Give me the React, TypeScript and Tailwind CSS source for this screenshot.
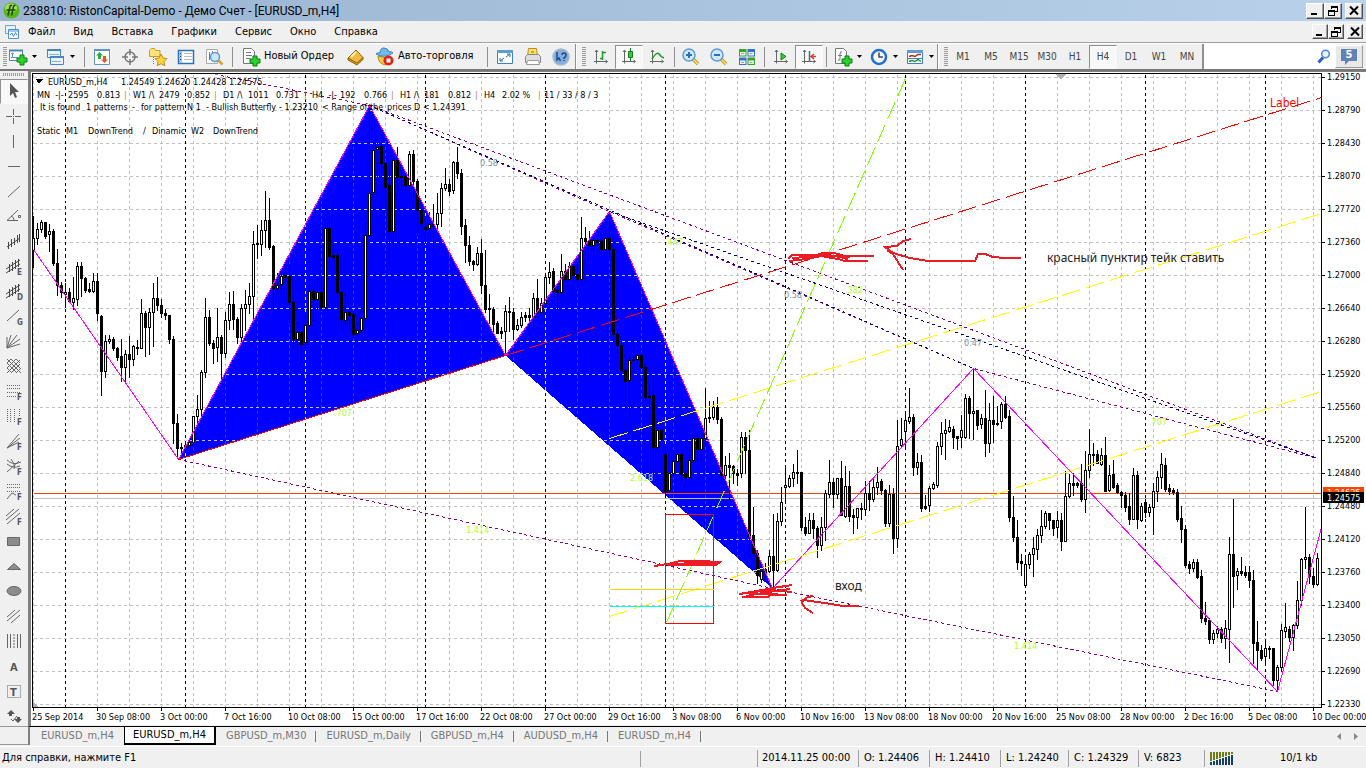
import type { ReactNode } from "react";

// high, open, close, low in chart units (y grows downwards)
const candles = [
  [216, 250, 238, 267], [223, 238, 229, 244], [220, 229, 222, 232], [222, 222, 236, 238], [224, 234, 231, 251],
  [229, 231, 263, 265], [249, 263, 285, 295], [282, 285, 292, 297], [283, 294, 292, 307], [288, 292, 301, 302],
  [277, 302, 298, 309], [262, 299, 266, 305], [262, 266, 278, 296], [277, 278, 290, 292], [283, 289, 291, 292],
  [273, 291, 281, 292], [273, 281, 313, 320], [315, 316, 371, 395], [335, 371, 341, 377], [335, 341, 339, 343],
  [337, 339, 348, 350], [347, 348, 357, 360], [339, 356, 367, 381], [350, 367, 354, 382], [336, 354, 359, 377],
  [345, 359, 346, 365], [340, 347, 348, 354], [299, 348, 313, 348], [311, 313, 327, 356], [308, 327, 312, 354],
  [283, 312, 298, 346], [277, 298, 305, 310], [299, 305, 313, 317], [309, 313, 315, 319], [315, 315, 339, 343],
  [336, 339, 423, 443], [414, 423, 448, 458], [443, 447, 448, 452], [442, 447, 445, 452], [440, 445, 442, 447],
  [416, 442, 416, 446], [395, 416, 409, 423], [370, 409, 372, 422], [298, 372, 317, 377], [310, 317, 343, 345],
  [340, 343, 348, 363], [308, 347, 337, 361], [335, 337, 353, 383], [312, 353, 320, 357], [292, 320, 304, 329],
  [291, 304, 319, 329], [317, 319, 337, 343], [304, 337, 308, 347], [290, 308, 304, 330], [283, 304, 296, 313],
  [231, 296, 244, 320], [225, 243, 244, 258], [220, 244, 230, 255], [191, 230, 220, 247], [198, 220, 247, 249],
  [245, 246, 288, 309], [273, 288, 285, 292], [270, 284, 276, 295], [262, 275, 277, 283], [267, 276, 302, 322],
  [297, 302, 339, 348], [321, 339, 332, 360], [332, 332, 344, 362], [314, 342, 325, 348], [277, 325, 291, 326],
  [288, 291, 299, 320], [279, 299, 292, 310], [276, 292, 307, 310], [219, 307, 228, 308], [213, 228, 256, 262],
  [245, 255, 257, 260], [250, 255, 292, 296], [291, 292, 319, 330], [294, 320, 312, 327], [307, 312, 315, 330],
  [311, 314, 334, 337], [323, 333, 330, 346], [304, 330, 318, 333], [223, 318, 235, 333], [105, 235, 193, 235],
  [143, 192, 150, 210], [143, 149, 147, 177], [143, 146, 163, 173], [162, 163, 187, 208], [168, 185, 231, 270],
  [157, 231, 160, 247], [147, 160, 177, 195], [170, 176, 177, 190], [172, 176, 185, 190], [151, 185, 154, 201],
  [150, 154, 181, 197], [179, 181, 210, 235], [201, 210, 223, 225], [217, 227, 229, 243], [212, 228, 224, 230],
  [204, 224, 225, 247], [193, 224, 213, 228], [183, 213, 188, 226], [168, 188, 184, 190], [179, 184, 191, 195],
  [161, 190, 162, 193], [147, 162, 173, 178], [169, 173, 226, 234], [219, 225, 245, 262], [236, 245, 261, 265],
  [260, 261, 264, 270], [247, 264, 253, 265], [239, 253, 285, 293], [250, 285, 309, 312], [294, 308, 309, 323],
  [307, 309, 324, 334], [321, 323, 333, 333], [327, 331, 333, 338], [305, 331, 311, 355], [297, 311, 312, 331],
  [308, 312, 329, 339], [319, 329, 325, 330], [312, 325, 317, 327], [312, 315, 317, 321], [308, 315, 317, 336],
  [293, 317, 298, 330], [279, 298, 312, 313], [298, 312, 303, 313], [276, 303, 277, 305], [262, 277, 272, 283],
  [268, 271, 291, 291], [283, 290, 292, 308], [254, 292, 271, 293], [264, 271, 279, 280], [262, 279, 266, 279],
  [265, 266, 275, 279], [262, 274, 279, 290], [217, 279, 238, 286], [227, 238, 241, 263], [231, 240, 245, 246],
  [238, 245, 240, 249], [238, 240, 242, 245], [232, 241, 249, 254], [233, 249, 238, 249], [211, 238, 249, 257],
  [244, 249, 334, 339], [331, 334, 345, 352], [341, 345, 370, 374], [363, 370, 381, 409], [354, 380, 360, 415],
  [338, 359, 360, 361], [351, 359, 355, 363], [353, 355, 367, 368], [364, 367, 397, 399], [384, 396, 397, 423],
  [375, 395, 447, 474], [418, 447, 430, 451], [424, 430, 439, 441], [447, 454, 491, 495], [472, 490, 473, 492],
  [450, 473, 461, 474], [450, 461, 454, 463], [453, 454, 474, 482], [463, 473, 477, 487], [455, 477, 460, 478],
  [432, 460, 438, 461], [434, 438, 449, 460], [432, 449, 438, 459], [388, 438, 418, 445], [401, 417, 418, 422],
  [401, 417, 407, 419], [397, 407, 419, 423], [417, 419, 475, 477], [456, 475, 465, 478], [453, 465, 467, 498],
  [465, 466, 473, 483], [469, 473, 475, 485], [432, 473, 437, 477], [432, 437, 450, 473], [430, 450, 536, 557],
  [507, 535, 553, 558], [550, 553, 575, 583], [570, 579, 571, 582], [563, 569, 572, 577], [550, 571, 556, 572],
  [514, 556, 570, 587], [513, 570, 521, 571], [487, 521, 502, 525], [466, 487, 485, 502], [475, 486, 478, 487],
  [464, 478, 472, 486], [450, 472, 473, 483], [472, 472, 527, 530], [517, 527, 533, 535], [513, 533, 520, 533],
  [513, 520, 528, 538], [526, 528, 545, 557], [517, 545, 527, 550], [490, 527, 493, 540], [460, 494, 482, 497],
  [478, 482, 494, 507], [478, 494, 478, 498], [461, 478, 515, 515], [466, 516, 486, 517], [471, 486, 516, 521],
  [509, 515, 517, 533], [508, 517, 508, 528], [503, 508, 509, 519], [481, 509, 493, 515], [481, 493, 499, 510],
  [478, 499, 487, 501], [467, 487, 482, 494], [479, 481, 490, 494], [489, 490, 523, 526], [485, 523, 494, 528],
  [488, 494, 538, 553], [420, 538, 446, 547], [418, 445, 439, 446], [413, 431, 420, 448], [388, 421, 417, 423],
  [414, 417, 467, 475], [453, 467, 462, 474], [455, 462, 508, 511], [495, 506, 508, 509], [486, 505, 488, 511],
  [482, 488, 484, 489], [442, 485, 446, 487], [422, 446, 433, 454], [419, 433, 430, 459], [420, 431, 427, 432],
  [426, 429, 437, 448], [436, 436, 438, 449], [415, 437, 430, 447], [394, 437, 398, 438], [396, 398, 413, 438],
  [368, 413, 411, 439], [410, 410, 425, 429], [414, 424, 418, 428], [390, 418, 443, 456], [403, 443, 420, 452],
  [396, 420, 424, 442], [406, 423, 424, 425], [402, 421, 404, 428], [396, 404, 417, 418], [410, 416, 517, 521],
  [496, 517, 537, 541], [520, 537, 562, 569], [554, 561, 563, 575], [558, 585, 564, 585], [552, 564, 554, 568],
  [537, 554, 548, 576], [529, 549, 535, 559], [510, 535, 526, 542], [511, 526, 513, 528], [513, 513, 520, 529],
  [520, 520, 528, 535], [511, 527, 520, 537], [513, 520, 541, 550], [471, 541, 496, 541], [474, 496, 483, 497],
  [473, 483, 485, 495], [482, 483, 485, 487], [464, 483, 499, 501], [451, 499, 470, 512], [429, 470, 454, 477],
  [443, 454, 455, 465], [450, 454, 463, 463], [448, 464, 455, 465], [437, 455, 491, 491], [465, 490, 475, 491],
  [460, 474, 487, 488], [483, 485, 492, 493], [491, 492, 495, 507], [492, 495, 507, 511], [493, 506, 519, 524],
  [468, 519, 475, 519], [471, 475, 519, 528], [503, 520, 506, 521], [499, 502, 512, 517], [504, 512, 507, 516],
  [483, 507, 491, 534], [471, 491, 477, 501], [453, 477, 464, 488], [458, 465, 489, 491], [484, 488, 491, 494],
  [488, 490, 492, 494], [489, 492, 519, 521], [506, 518, 529, 542], [525, 529, 565, 567], [561, 564, 568, 573],
  [559, 568, 562, 571], [559, 562, 577, 578], [570, 576, 618, 622], [602, 618, 621, 624], [618, 620, 639, 643],
  [630, 639, 633, 643], [626, 633, 629, 637], [627, 629, 638, 642], [620, 638, 628, 648], [537, 629, 554, 662],
  [499, 554, 576, 607], [568, 575, 571, 589], [557, 571, 573, 575], [566, 572, 575, 577], [566, 572, 580, 587],
  [570, 580, 643, 663], [621, 642, 650, 670], [645, 650, 658, 660], [639, 656, 648, 662], [646, 648, 649, 658],
  [648, 648, 680, 685], [665, 680, 667, 691], [624, 667, 630, 671], [603, 631, 627, 637], [626, 629, 637, 641],
  [624, 637, 625, 650], [581, 625, 600, 628], [558, 600, 559, 605], [507, 559, 557, 568], [554, 557, 576, 583],
  [568, 576, 584, 587], [553, 584, 558, 585],
];

const prices = [
  "1.29150", "1.28790", "1.28430", "1.28070", "1.27720", "1.27360", "1.27000", "1.26640", "1.26280", "1.25920",
  "1.25560", "1.25200", "1.24840", "1.24480", "1.24120", "1.23760", "1.23400", "1.23050", "1.22690", "1.22330",
];

const dates = [
  "25 Sep 2014", "30 Sep 08:00", "3 Oct 00:00", "7 Oct 16:00", "10 Oct 08:00", "15 Oct 00:00", "17 Oct 16:00",
  "22 Oct 08:00", "27 Oct 00:00", "29 Oct 16:00", "3 Nov 08:00", "6 Nov 00:00", "10 Nov 16:00", "13 Nov 08:00",
  "18 Nov 00:00", "20 Nov 16:00", "25 Nov 08:00", "28 Nov 00:00", "2 Dec 16:00", "5 Dec 08:00", "10 Dec 00:00",
];

const quote: [number, string][] = [
  [48, "EURUSD_m,H4"], [121, "1.24549"], [157, "1.24620"], [193, "1.24428"], [229, "1.24575"],
];

const summary: [number, string][] = [
  [37, "MN  -|-"], [68, "2595"], [97, "0.813"], [124, "|"], [133, "W1 /\\"], [159, "2479"], [187, "0.852"],
  [214, "|"], [223, "D1 /\\"], [248, "1011"], [276, "0.731"], [304, "|"], [312, "H4  -|-"], [340, "192"],
  [364, "0.766"], [391, "|"], [400, "H1 /\\"], [424, "181"], [448, "0.812"], [475, "|"], [484, "H4"],
  [502, "2.02 %"], [538, "|"], [544, "11 / 33 / 8 / 3"],
];

const pattern: [number, string][] = [
  [40, "It is found"], [86, "1 patterns"], [132, "-"], [141, "for pattern N 1"], [206, "- Bullish Butterfly"],
  [279, "- 1.23210"], [322, "< Range of the"], [387, "prices D"], [423, "< 1.24391"],
];

const trend: [number, string][] = [
  [37, "Static"], [66, "M1"], [88, "DownTrend"], [143, "/"], [152, "Dinamic"], [191, "W2"], [213, "DownTrend"],
];

const ratios: [number, number, string, string][] = [
  [480, 166, "0.58", "#8090a0"], [784, 298, "0.58", "#8090a0"], [964, 346, "0.47", "#8090a0"],
  [665, 245, ".447", "#adff2f"], [845, 293, ".382", "#adff2f"], [334, 416, ".707", "#adff2f"],
  [630, 481, "2.618", "#adff2f"], [466, 533, "1.414", "#adff2f"], [1014, 649, "1.414", "#adff2f"],
  [1149, 425, ".707", "#adff2f"],
];

const dotted: [string, string][] = [
  ["M215 74L369 105L1317 458", "#800080"],
  ["M369 105L609 211L973 368L1317 458", "#800080"],
  ["M369 105L973 368", "#000080"],
  ["M609 211L1317 458", "#000080"],
  ["M178 459L772 588L1277 691", "#800080"],
];

const rows = prices.map((_, i) => 77 + i * 33);
const columns = Array.from({ length: 41 }, (_, i) => 33 + i * 32);
const weeks = Array.from({ length: 11 }, (_, i) => 65 + i * 120);

const Words = ({ y, words }: { y: number; words: [number, string][] }) =>
  words.map(([x, word]) => (
    <text key={x} x={x} y={y} fill={word === "|" ? "#c08040" : "#000"}>{word}</text>
  ));

const Chart = () => (
  <svg
    viewBox="31 72 1335 653"
    className="block h-auto w-full bg-white font-['DejaVu_Sans_Condensed','Noto_Sans',sans-serif] text-[9px] [&_text]:whitespace-pre"
    role="img"
    aria-label="EURUSD_m,H4"
  >
    <defs>
      <clipPath id="plot"><rect x="33" y="74" width="1288" height="633" /></clipPath>
      <clipPath id="wings"><path d="M178 459L369 105L505 355ZM505 355L609 211L772 588Z" /></clipPath>
    </defs>

    <g shapeRendering="crispEdges" transform="translate(.5 .5)" fill="none">
      <g strokeDasharray="3 3" stroke="#c0c0c0">
        {columns.map((x) => <path key={x} d={`M${x} 74V707`} />)}
        {rows.map((y) => <path key={y} d={`M33 ${y}H1321`} />)}
        {weeks.map((x) => <path key={x} d={`M${x} 74V707`} stroke="#fff" strokeDasharray="none" />)}
        {weeks.map((x) => <path key={x} d={`M${x} 74V707`} stroke="#000" />)}
      </g>
      <path d="M178 459L369 105L505 355ZM505 355L609 211L772 588Z" fill="#00f" />
      <g strokeDasharray="3 3" clipPath="url(#wings)">
        {columns.map((x) => <path key={x} d={`M${x} 74V707`} stroke="#3f3fc8" />)}
        {rows.map((y) => <path key={y} d={`M33 ${y}H1321`} stroke="#c0c0ff" />)}
        {weeks.map((x) => <path key={x} d={`M${x} 74V707`} stroke="#ffff50" />)}
      </g>
      <path d="M33 493H1321" stroke="#ff4500" />
      <path d="M33 498H1321" stroke="#c0c0c0" />
    </g>

    <g clipPath="url(#plot)" shapeRendering="crispEdges">
      {candles.map(([high, open, close, low], i) => {
        const x = 33 + i * 4;
        const top = Math.min(open, close);
        const height = Math.abs(open - close) + 1;
        return (
          <g key={x}>
            <rect x={x} y={high} width="1" height={low - high + 1} />
            <rect x={x - 1} y={top} width="3" height={height} />
            {close < open && height > 2 && <rect x={x} y={top + 1} width="1" height={height - 2} fill="#fff" />}
          </g>
        );
      })}
    </g>

    <g shapeRendering="crispEdges" transform="translate(.5 .5)" fill="none" clipPath="url(#plot)">
      <path d="M33 249L178 459L369 105L505 355L609 211L772 588L973 368L1277 691L1321 527" stroke="#f0f" />
      {dotted.map(([d, color]) => <path key={d} d={d} stroke={color} strokeDasharray="3 3" />)}
      <path d="M178 459L505 355" stroke="#f00" />
      <path d="M505 355L1321 97" stroke="#f00" strokeDasharray="19 6" />
      <path d="M609 438L1321 213M609 616L1321 391" stroke="#ff0" strokeDasharray="19 6" />
      <path d="M666 622L905 78" stroke="#7fff00" strokeDasharray="19 6" />
      <path d="M665 514H713V623H665Z" stroke="#f00" />
      <path d="M609 589H713" stroke="#ffd700" />
      <path d="M609 606H713" stroke="#0ff" />
    </g>

    <g stroke="#ed1c24" strokeWidth="2" fill="none" shapeRendering="crispEdges">
      <path d="M788 259L792 255H820L822 253H834L845 256H874M789 261L806 259L821 256L838 259L845 261H868M792 258L806 257L820 254L834 256L845 258L852 256M820 256H842L848 260" />
      <path d="M1021 258H1005L993 257L985 254H978L975 261H928L910 258L893 253L885 247L897 246L903 241L911 239M887 250L893 254L903 270" />
      <path d="M654 566L668 564L680 561H700L720 562L716 565H668L690 563H718" />
      <path d="M739 594L757 591L773 588L792 585M739 594L770 590L792 592M742 597H768L770 595H787M746 596L768 592L790 589M750 594H778" />
      <path d="M859 606H843L825 603L803 600L808 597L813 596M803 600L802 603L805 608L813 613" />
    </g>

    <g shapeRendering="crispEdges">
      <path d="M32 73H1322V708H32ZM33 74V707H1321V74Z" fillRule="evenodd" />
      {rows.map((y) => <rect key={y} x="1322" y={y} width="3" height="1" />)}
      {dates.map((date, i) => <rect key={date} x={33 + i * 64} y="708" width="1" height="3" />)}
      <path d="M33 702L38 707H33ZM1056 74H1066L1061 80Z" fill="#b0b0b0" />
      <path d="M36 79H43L39 84Z" />
    </g>

    {prices.map((price, i) => <text key={price} x="1327" y={80 + i * 33}>{price}</text>)}
    {dates.map((date, i) => <text key={date} x={32 + i * 64} y="720">{date}</text>)}
    <rect x="1323" y="487" width="41" height="11" fill="#ff4500" />
    <text x="1327" y="496" fill="#fff">1.24625</text>
    <rect x="1323" y="492" width="41" height="11" />
    <text x="1327" y="501" fill="#fff">1.24575</text>

    <Words y={85} words={quote} />
    <Words y={98} words={summary} />
    <Words y={110} words={pattern} />
    <Words y={134} words={trend} />
    {ratios.map(([x, y, label, color]) => <text key={`${x}-${y}`} x={x} y={y} fill={color}>{label}</text>)}
    <text x="1270" y="107" fill="#f00" className="text-[12px]">Label</text>
    <g fill="#222" className="font-['Noto_Sans',sans-serif] text-[12px]">
      <text x="1047" y="262">красный пунктир тейк ставить</text>
      <text x="835" y="590">вход</text>
    </g>
  </svg>
);

const Icon = ({ size = 20, children }: { size?: number; children: ReactNode }) => (
  <svg width={size} height={size} viewBox={`0 0 ${size} ${size}`} fill="none" className="shrink-0">{children}</svg>
);

const Caret = () => (
  <svg width="5" height="3" viewBox="0 0 5 3" className="shrink-0"><path d="M0 0H5L2.500 3Z" /></svg>
);

const Plus = () => <path d="M12 9h4v3h3v4h-3v3h-4v-3H9v-4h3z" fill="#2bd32b" stroke="#087a12" />;

const Divider = ({ tight }: { tight?: boolean }) => (
  <div className={`flex shrink-0 justify-center ${tight ? "w-1.5" : "w-2"}`}>
    <div className="h-5 w-px bg-[#8f8f8f]" />
  </div>
);

const GroupEdge = () => <div className="mr-[5px] box-content h-full w-px shrink-0 border-r border-white bg-[#909090]" />;

const Grip = () => (
  <div className="mr-px h-5 w-1 shrink-0 bg-[repeating-linear-gradient(#9a9a9a_0_1px,#f0f0f0_1px_2px)]" />
);

const Tool = ({ label, pressed, children }: { label: string; pressed?: boolean; children: ReactNode }) => (
  <button
    type="button"
    aria-label={label}
    aria-pressed={pressed}
    className="flex h-6 w-7 shrink-0 items-center justify-center border border-transparent aria-pressed:border-t-[#909090] aria-pressed:border-l-[#909090] aria-pressed:bg-[#f8f8f8]"
  >
    {children}
  </button>
);

const Axes = ({ children }: { children: ReactNode }) => (
  <Icon>
    <path d="M5.500 3v13.500M3 14.500h13.500M4 5l1.500-2L7 5M14.500 13l2 1.500-2 1.500" stroke="#666" />
    {children}
  </Icon>
);

const Magnifier = ({ plus }: { plus?: boolean }) => (
  <Icon>
    <path d="M12 12l5 5" stroke="#c79a22" strokeWidth="3.500" />
    <path d="M12 12l5 5" stroke="#ffe36b" strokeWidth="1.500" />
    <circle cx="8" cy="8" r="6" fill="#cfe9fb" stroke="#5b9bd8" strokeWidth="1.500" />
    <path d={plus ? "M5 8h6M8 5v6" : "M5 8h6"} stroke="#2a6fbb" strokeWidth="2" />
  </Icon>
);

const WindowButtons = ({ compact }: { compact?: boolean }) => {
  const face = `flex shrink-0 items-center justify-center border border-t-white border-l-white border-r-[#505050] border-b-[#505050] bg-[#f0f0f0] shadow-[inset_-1px_-1px_#a0a0a0] ${
    compact ? "h-[15px] w-4" : "h-4 w-[18px]"
  }`;
  return (
    <div className="flex pr-[3px]">
      <button type="button" aria-label="Свернуть" className={face}>
        <svg width="12" height="11" viewBox="0 0 12 11"><path d="M2 8h6v2H2z" /></svg>
      </button>
      <button type="button" aria-label="Восстановить" className={face}>
        <svg width="12" height="11" viewBox="0 0 12 11" fill="none" stroke="#000" shapeRendering="crispEdges">
          <path d="M4.500 4V1.500h6v5H8M4 2h7M1.500 5.500h6v5h-6zM1 6h7" />
        </svg>
      </button>
      <button type="button" aria-label="Закрыть" className={`${face} ml-[3px]`}>
        <svg width="12" height="11" viewBox="0 0 12 11"><path d="M2 1.500l8 8M10 1.500l-8 8" stroke="#000" strokeWidth="2" /></svg>
      </button>
    </div>
  );
};

const TitleBar = () => (
  <header className="flex h-[21px] items-center bg-linear-to-r from-[#99b4d1] to-[#b9d1ea] pl-[3px]">
    <svg width="17" height="17" viewBox="0 0 17 17" className="mr-[3px]">
      <circle cx="8.500" cy="8.500" r="8" fill="#58b813" />
      <ellipse cx="8" cy="6" rx="6" ry="4.500" fill="#a4dc5c" />
      <path d="M5 13.500l2-9q.4-1.500 2-1M3.500 8h9M8.500 13.500l2-9q.4-1.500 2-1" stroke="#194a08" strokeWidth="1.500" fill="none" />
    </svg>
    <h1 className="flex-1 truncate font-['Roboto','Noto_Sans',sans-serif] text-[12px]">
      238810: RistonCapital-Demo - Демо Счет - [EURUSD_m,H4]
    </h1>
    <WindowButtons />
  </header>
);

const menu = ["Файл", "Вид", "Вставка", "Графики", "Сервис", "Окно", "Справка"];

const MenuBar = () => (
  <nav className="flex h-[21px] items-center pl-1">
    <Icon size={16}>
      <path d="M1.500 1.500h10v8h-10z" fill="#e8f3fd" stroke="#6aa5dc" />
      <path d="M4.500 5.500h10v9h-10z" fill="#fff" stroke="#4c8ed0" />
      <path d="M4 7h11M6 11l2-2 1.500 3.500 2-4 1.500 3" stroke="#4c8ed0" />
    </Icon>
    <div className="flex flex-1 gap-[18px] pt-[2px] pl-2 text-[11px]">
      {menu.map((item) => <a key={item} href="#">{item}</a>)}
    </div>
    <WindowButtons compact />
  </nav>
);

const frames = ["M1", "M5", "M15", "M30", "H1", "H4", "D1", "W1", "MN"];

const Toolbar = () => (
  <div className="flex h-[29px] items-center border-t border-b-2 border-t-[#a0a0a0] border-b-[#777] pt-px pl-[3px] shadow-[inset_0_1px_#fff]">
    <Grip />
    <button type="button" aria-label="Новый график" className="flex w-[38px] shrink-0 items-center gap-1">
      <Icon>
        <path d="M1.500 3.500h13v10h-13z" fill="#fff" stroke="#4d84b8" />
        <path d="M1 3.500h14" stroke="#4d84b8" strokeWidth="2" />
        <path d="M4.500 6v5M3 7l1.500-1L6 7M3 10.500h7" stroke="#5795c8" />
        <g transform="translate(0 -1)"><Plus /></g>
      </Icon>
      <Caret />
    </button>
    <button type="button" aria-label="Профили" className="flex w-[34px] shrink-0 items-center gap-1">
      <Icon>
        <path d="M1.500 2.500h13v8h-13zM4.500 9.500h13v8h-13z" fill="#eaf4fd" stroke="#4d84b8" />
        <path d="M1 3h14M4 10h14" stroke="#4d84b8" strokeWidth="2" />
        <path d="M3 7.500h10M6 14.500h9" stroke="#88b4dc" />
      </Icon>
      <Caret />
    </button>
    <Divider />
    <Tool label="Обзор рынка">
      <Icon>
        <path d="M2.500 2.500h15v15h-15z" fill="#fff" stroke="#5c94c8" />
        <path d="M2 3h16" stroke="#5c94c8" strokeWidth="2" />
        <path d="M7.500 5l3.500 3.500H9V12H6V8.500H4z" fill="#2fae35" />
        <path d="M12.500 16L9 12.500h2V9h3v3.500h2z" fill="#e4552a" />
      </Icon>
    </Tool>
    <Tool label="Перекрестие">
      <Icon>
        <circle cx="10" cy="10" r="5" stroke="#777" strokeWidth="1.500" />
        <path d="M10 2v6M10 12v6M2 10h6M12 10h6" stroke="#777" strokeWidth="1.500" />
      </Icon>
    </Tool>
    <Tool label="Навигатор">
      <Icon>
        <path d="M1.500 3.500l2-2h3l1.500 2h4v6h-10.500z" fill="#ffe17a" stroke="#c89e28" />
        <path d="M5.500 10v8" stroke="#777" strokeDasharray="1 1" />
        <path d="M13 7l2 4 4 .5-3 3 .8 4.200L13 16.700 9.200 18.700 10 14.500l-3-3 4-.5z" fill="#ffd43c" stroke="#bd8c16" />
      </Icon>
    </Tool>
    <Tool label="Терминал">
      <Icon>
        <path d="M2.500 3.500h15v13h-15z" fill="#fff" stroke="#2f6fb3" strokeWidth="1.500" />
        <path d="M3 4h3v12H3z" fill="#9cc4ea" />
        <path d="M8 6.500h8M8 9.500h8M8 12.500h8" stroke="#bbb" />
        <path d="M4.500 6v8" stroke="#234e91" strokeDasharray="1 2" />
      </Icon>
    </Tool>
    <Tool label="Тестер">
      <Icon>
        <path d="M2.500 2.500h11v14h-11z" fill="#fff" stroke="#aaa" />
        <path d="M5.500 5v8M8.500 4v5" stroke="#777" />
        <circle cx="11" cy="10" r="4.500" fill="#cbe8fb" stroke="#5a9bd0" strokeWidth="1.500" />
        <path d="M14.500 13.500l4 4" stroke="#d3a132" strokeWidth="2.500" />
      </Icon>
    </Tool>
    <Divider />
    <button type="button" className="flex w-[106px] shrink-0 items-center gap-[3px] pl-[5px] text-[11px] whitespace-nowrap">
      <Icon>
        <path d="M2.500 1.500h8l3 3v12h-11z" fill="#fff" stroke="#777" />
        <path d="M5 5.500h5M5 8.500h6M5 11.500h4" stroke="#777" />
        <Plus />
      </Icon>
      Новый Ордер
    </button>
    <Tool label="Редактор">
      <Icon>
        <path d="M2 11l8-8 7 7.500-6 6.500z" fill="#f0bb43" stroke="#94640a" />
        <path d="M2 11v2l9 5 6-5.500v-2L11 16z" fill="#d99a24" stroke="#94640a" />
        <path d="M5 10l5-5" stroke="#fff0b0" strokeWidth="2" />
      </Icon>
    </Tool>
    <button type="button" className="flex w-[113px] shrink-0 items-center gap-[3px] pl-[5px] text-[11px] whitespace-nowrap">
      <Icon>
        <path d="M3 9q0 8 8 9l5-6z" fill="#f4c944" stroke="#b5881d" />
        <path d="M1 7q8 5 17-1-1-2-4-1-1-4-5-4T5 6Q2 5 1 7z" fill="#71b9e8" stroke="#3f83ba" />
        <circle cx="13.500" cy="13.500" r="5" fill="#dc2414" />
        <path d="M11.500 11.500h4v4h-4z" fill="#fff" />
      </Icon>
      Авто-торговля
    </button>
    <Divider />
    <Tool label="Полный экран">
      <Icon>
        <path d="M2.500 3.500h15v13h-15z" fill="#fff" stroke="#3f7fbc" />
        <path d="M2 4.500h16" stroke="#5b9bd8" strokeWidth="3" />
        <path d="M11 10l4-3M12 7h3v3M9 11l-4 3M5 11v3h3" stroke="#2a6fa8" />
      </Icon>
    </Tool>
    <Tool label="Печать">
      <Icon>
        <path d="M5.500 1.500h8l1 8h-10z" fill="#ffe06b" stroke="#b98e1d" />
        <path d="M2.500 9.500l2-2h11l2 2v6h-15z" fill="#ddd" stroke="#888" />
        <path d="M4.500 13.500h11l1 4h-13z" fill="#fff" stroke="#999" />
        <path d="M8 5h3" stroke="#8a6b12" />
      </Icon>
    </Tool>
    <Tool label="Помощь">
      <Icon>
        <circle cx="10" cy="10" r="8" fill="#82aee0" stroke="#a8b8cc" strokeWidth="1.500" />
        <path d="M6 5v8l2-2 1.500 3M11 8q0-2 2-2t2 2-2 3v1M13 13v1" stroke="#1c4a86" strokeWidth="1.500" />
      </Icon>
    </Tool>
    <GroupEdge />
    <Grip />
    <Tool label="Бары"><Axes><path d="M11.500 4v9M9 11.500h3M12 5.500h3" stroke="#1f9a2a" strokeWidth="1.500" /></Axes></Tool>
    <Tool label="Свечи" pressed>
      <Axes><path d="M11.500 1v13" stroke="#167a1c" /><path d="M9.500 4.500h4v6h-4z" fill="#35cc3d" stroke="#167a1c" /></Axes>
    </Tool>
    <Tool label="Линия"><Axes><path d="M5 12q5-8 7-5 2 3 5 4" stroke="#1f9a2a" strokeWidth="1.500" /></Axes></Tool>
    <Divider tight />
    <Tool label="Увеличить"><Magnifier plus /></Tool>
    <Tool label="Уменьшить"><Magnifier /></Tool>
    <Tool label="Упорядочить окна">
      <Icon>
        <path d="M2 2h7.500v7.500H2zM10.500 10.500H18V18h-7.500z" fill="#3aa12f" />
        <path d="M10.500 2H18v7.500h-7.500zM2 10.500h7.500V18H2z" fill="#3a6fd0" />
        <path d="M3 5h5.500v3.500H3zM11.500 5H17v3.500h-5.500zM3 13.500h5.500V17H3zM11.500 13.500H17V17h-5.500z" fill="#e9f5e4" />
        <path d="M4 6.500h3M12.500 6.500h3M4 15.500h3M12.500 15.500h3" stroke="#8ab08a" />
      </Icon>
    </Tool>
    <Divider tight />
    <Tool label="Автопрокрутка"><Axes><path d="M10 6l5 3.500-5 3.500z" fill="#35cc3d" stroke="#167a1c" /></Axes></Tool>
    <Tool label="Сдвиг графика" pressed>
      <Axes><path d="M10.500 4v10" stroke="#3469b5" strokeWidth="1.500" /><path d="M17 9.500h-4M15 7l-3 2.500 3 2.500" stroke="#d2401c" strokeWidth="1.500" /></Axes>
    </Tool>
    <Divider tight />
    <button type="button" aria-label="Индикаторы" className="flex w-9 shrink-0 items-center gap-1 pl-1">
      <Icon>
        <path d="M2.500 1.500h8l3 3v12h-11z" fill="#fff" stroke="#777" />
        <path d="M9 5q-2-1-2 2v5q0 2-2 1M5 8.500h4" stroke="#777" />
        <Plus />
      </Icon>
      <Caret />
    </button>
    <button type="button" aria-label="Периоды" className="flex w-9 shrink-0 items-center gap-1 pl-1">
      <Icon>
        <circle cx="10" cy="10" r="7" fill="#f6fafd" stroke="#1f6fd0" strokeWidth="2.500" />
        <path d="M10 5.500V10h4" stroke="#444" strokeWidth="1.500" />
      </Icon>
      <Caret />
    </button>
    <button type="button" aria-label="Шаблоны" className="flex w-9 shrink-0 items-center gap-1 pl-1">
      <Icon>
        <path d="M2.500 3.500h15v13h-15z" fill="#fff" stroke="#3f7fbc" />
        <path d="M2 4.500h16" stroke="#5b9bd8" strokeWidth="3" />
        <path d="M3 11.500h14" stroke="#3f7fbc" />
        <path d="M4 9.500l3-1 3 1 3-2h3" stroke="#a32a1c" strokeWidth="1.500" />
        <path d="M4 14.500l3-1 3 1 3-2 3 2" stroke="#2c8f35" strokeWidth="1.500" />
      </Icon>
      <Caret />
    </button>
    <GroupEdge />
    <Grip />
    <div className="flex text-[10px] text-[#444]">
      {frames.map((frame) => <Tool key={frame} label={frame} pressed={frame === "H4" || undefined}>{frame}</Tool>)}
    </div>
    <div className="ml-px flex h-full min-w-0 flex-1 items-center border-l-2 border-[#909090] bg-white">
      <input type="search" aria-label="Поиск" className="h-full min-w-0 flex-1 px-1 text-[11px] outline-none" />
      <svg width="14" height="15" viewBox="0 0 14 15" fill="none" className="mr-1 shrink-0">
        <path d="M6 8.500L1.500 13.500" stroke="#2f5fc0" strokeWidth="3" />
        <circle cx="8.500" cy="5" r="3.800" fill="#e6f1ff" stroke="#4f86e0" strokeWidth="1.500" />
      </svg>
    </div>
    <button type="button" aria-label="Сообщения" className="mr-[3px] flex h-[23px] w-7 shrink-0 items-center justify-center border border-l-white border-r-[#999] border-b-[#999] border-t-white bg-[#e8e8e8]">
      <span className="relative mb-1 flex h-3 w-4 items-center justify-center bg-[#6281b5] text-[11px] leading-none font-bold text-white">
        5
        <span className="absolute top-3 left-1 border-t-4 border-r-4 border-t-[#6281b5] border-r-transparent" />
      </span>
    </button>
  </div>
);

const Mark = ({ children }: { children: string }) => (
  <text x="15" y="20" fill="#555" stroke="none" className="text-[8px] font-bold">{children}</text>
);

const drawing: [string, ReactNode][] = [
  ["Курсор", <path d="M8 3v13l3-3 2 5 2-1-2-5h4z" fill="#555" stroke="none" />],
  ["Перекрестие", <path d="M11.500 4v6M11.500 13v6M4 11.500h6M13 11.500h6M11 11.500h1" />],
  ["Вертикальная линия", <path d="M11.500 5v13" />],
  ["Горизонтальная линия", <path d="M6 11.500h12" />],
  ["Трендовая линия", <path d="M6 17L18 6" />],
  ["Трендовая линия по углу", <path d="M16 5L5 15.500h11M9 11q3 1 3 4M16.500 10.500h2v2h-2z" />],
  ["Волны", <path d="M5 17l13-9M6.500 12v7M9.500 9v8M12.500 8v7M15.500 5v8M17.500 4v8" stroke="#444" />],
  ["Равноудаленный канал", <><path d="M4 14L18 5M4 18L18 9M7.500 9v8M10.500 7v9M13.500 5v9M16.500 4v8" stroke="#444" /><Mark>E</Mark></>],
  ["Канал отклонений", <><path d="M4 14L18 5M4 18L18 9M7.500 9v8M10.500 7v9M13.500 5v9M16.500 4v8" stroke="#444" /><Mark>D</Mark></>],
  ["Линия Ганна", <><path d="M5 16L17 5" /><Mark>G</Mark></>],
  ["Веер Ганна", <path d="M5 18V7M5 18L9 5M5 18L15 5M5 18L18 9M5 18L18 14" />],
  ["Сетка Ганна", <path d="M5 8l4-4 10 10M5 13l9-9M5 18L18 5M9 18l9-9M5 4l14 14M5 8l10 10M5 13l5 5M14 18l4-4M14 4l4 4" />],
  ["Линии Фибоначчи", <><path d="M5 5.500h14M5 8.500h14M5 12.500h14M5 16.500h9" strokeDasharray="1 1" /><Mark>F</Mark></>],
  ["Временные зоны", <><path d="M5.500 4v14M8.500 4v14M12.500 4v14M17.500 4v8" strokeDasharray="1 1" /><Mark>F</Mark></>],
  ["Веер Фибоначчи", <><path d="M5 18L17 4M5 18L18 8M5 18L17 12" /><Mark>F</Mark></>],
  ["Дуги Фибоначчи", <><path d="M5 5q6 6 14 2M5 9q6 5 13 2M5 17L17 6M9 4q5 7 3 10" /><Mark>F</Mark></>],
  ["Расширение Фибоначчи", <><path d="M5 4.500h14M5 7.500h14M5 11.500h14" strokeDasharray="1 1" /><path d="M5 19l5-6 4 2" /><Mark>F</Mark></>],
  ["Канал Фибоначчи", <><path d="M4 11L12 4M4 15L17 4M5 19L18 8" /><Mark>F</Mark></>],
  ["Прямоугольник", <path d="M5.500 7.500h12v8h-12z" fill="#8c8c8c" />],
  ["Треугольник", <path d="M5.500 14.500h13l-6.500-6z" fill="#8c8c8c" />],
  ["Эллипс", <ellipse cx="12" cy="11" rx="7" ry="4.500" fill="#8c8c8c" />],
  ["Канал", <path d="M5 12l8-7M5 16l13-11M9 18l9-8" />],
  ["Цикличные линии", <><path d="M5.500 4v14M8.500 4v14M15.500 4v14M18.500 4v14" /><path d="M12 4v14" strokeDasharray="2 1" /></>],
  ["Текст", <text x="8" y="16" fill="#555" stroke="none" className="text-[11px] font-bold">A</text>],
  ["Метка", <><path d="M5.500 5.500h13v12h-13z" strokeDasharray="1 1" /><text x="8" y="16" fill="#555" stroke="none" className="text-[11px] font-bold">T</text></>],
  ["Стрелки", <><path d="M9 5l4 4H10v2H7V9H5zM15 12h3v2h2l-4 4-4-4h3z" fill="#555" stroke="none" /><path d="M9 14l2 2 4-5" /></>],
];

const DrawingBar = () => (
  <aside className="-mb-[3px] flex w-7 shrink-0 flex-col text-[8px]">
    <div className="mx-[3px] mt-[2px] mb-[3px] h-[3px] bg-[repeating-linear-gradient(90deg,#9a9a9a_0_1px,#f0f0f0_1px_2px)]" />
    {drawing.map(([label, shape], i) => (
      <button
        key={label}
        type="button"
        aria-label={label}
        aria-pressed={i === 0 || undefined}
        className="flex h-[25px] items-center justify-center border border-transparent aria-pressed:border-t-[#909090] aria-pressed:border-l-[#909090] aria-pressed:bg-[#f8f8f8]"
      >
        <svg width="24" height="23" viewBox="0 0 24 23" fill="none" stroke="#666">{shape}</svg>
      </button>
    ))}
  </aside>
);

const tabs = ["EURUSD_m,H4", "EURUSD_m,H4", "GBPUSD_m,M30", "EURUSD_m,Daily", "GBPUSD_m,H4", "AUDUSD_m,H4", "EURUSD_m,H4"];

const Tabs = () => (
  <div className="flex h-[21px] items-start border-b border-white text-[11px] leading-4 text-[#777]">
    <div className="h-[19px] w-7 shrink-0 border-y border-[#999]" />
    <div className="flex h-[19px] flex-1 border-t border-l-2 border-t-black border-l-[#808080]">
      {tabs.map((tab, i) => (
        <button
          key={i}
          type="button"
          className={
            i === 1
              ? "h-[18px] border-r-2 border-b-2 border-l border-black bg-white px-2 text-black"
              : i === 0
                ? "h-[18px] pr-[10px] pl-[11px]"
                : "relative h-[18px] px-[10px] after:absolute after:top-1 after:right-0 after:h-[11px] after:w-px after:bg-[#777]"
          }
        >
          {tab}
        </button>
      ))}
      <div className="ml-auto flex items-center gap-[13px] pr-2">
        <svg width="4" height="7" viewBox="0 0 4 7"><path d="M4 0v7L0 3.500z" fill="#888" /></svg>
        <svg width="4" height="7" viewBox="0 0 4 7"><path d="M0 0v7l4-3.500z" fill="#888" /></svg>
      </div>
    </div>
  </div>
);

const bars = [2, 3, 4, 5, 6, 7, 8, 9];

const StatusBar = () => (
  <footer className="flex h-5 items-center pt-[3px] text-[11px] whitespace-nowrap">
    <span className="flex-1 pl-[2px]">Для справки, нажмите F1</span>
    <span className="h-4 w-[117px] border-l border-[#a0a0a0]" />
    <span className="w-[101px] border-l border-[#a0a0a0] pl-1">2014.11.25 00:00</span>
    <span className="w-[71px] border-l border-[#a0a0a0] pl-[5px]">O: 1.24406</span>
    <span className="w-[71px] border-l border-[#a0a0a0] pl-[5px]">H: 1.24410</span>
    <span className="w-[68px] border-l border-[#a0a0a0] pl-[5px]">L: 1.24240</span>
    <span className="w-[70px] border-l border-[#a0a0a0] pl-[5px]">C: 1.24329</span>
    <span className="w-[66px] border-l border-[#a0a0a0] pl-[5px]">V: 6823</span>
    <span className="flex w-[162px] items-center border-l border-[#a0a0a0] pl-[5px]">
      <svg width="24" height="13" viewBox="0 0 24 13" shapeRendering="crispEdges">
        {bars.map((height, i) => (
          <g key={height}>
            <rect x={i * 3} y="0" width="2" height={11 - height} fill="#6b7f10" />
            <rect x={i * 3} y={12 - height} width="2" height={height + 1} fill="#123f63" />
          </g>
        ))}
      </svg>
      <span className="pl-[46px]">10/1 kb</span>
    </span>
  </footer>
);

const App = () => (
  <div className="flex min-h-screen flex-col overflow-hidden bg-[#f0f0f0] font-['DejaVu_Sans_Condensed','Noto_Sans',sans-serif] text-black">
    <TitleBar />
    <MenuBar />
    <Toolbar />
    <main className="flex">
      <DrawingBar />
      <section className="min-w-0 flex-1 border-t border-l-3 border-[#808080]">
        <Chart />
      </section>
    </main>
    <Tabs />
    <StatusBar />
  </div>
);

export default App;
